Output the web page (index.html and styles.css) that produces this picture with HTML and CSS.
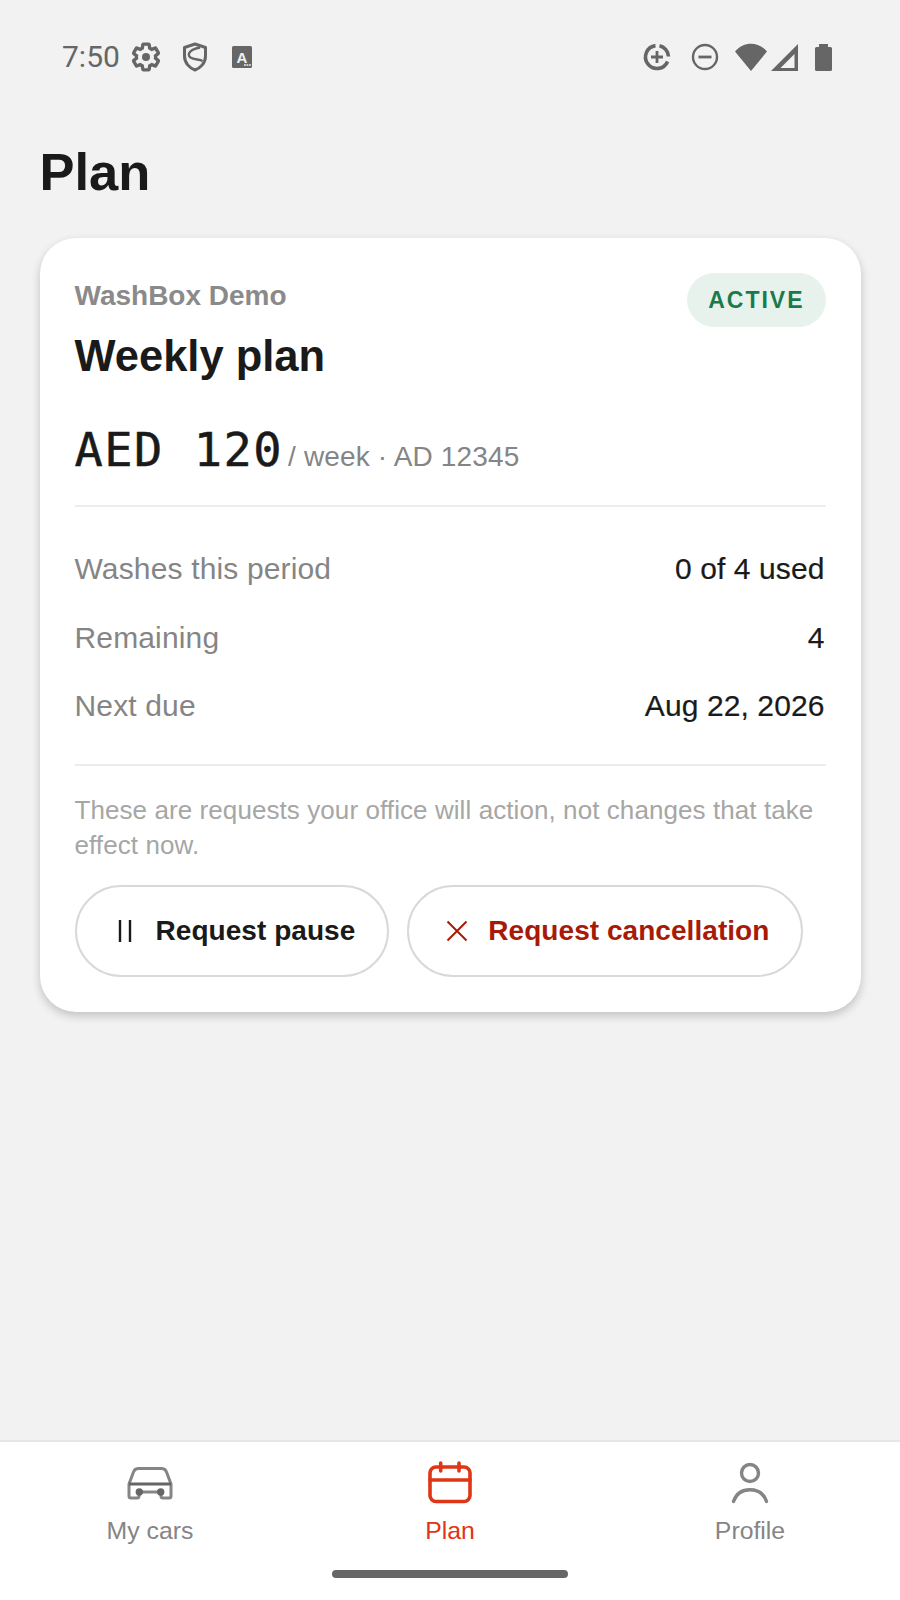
FILE: index.html
```html
<!DOCTYPE html>
<html lang="en">
<head>
    <meta charset="UTF-8">
    <meta name="viewport" content="width=device-width, initial-scale=1.0">
    <title>Plan - WashBox</title>
    <link rel="stylesheet" href="styles.css">
</head>
<body>
    <div class="screen">
        <div class="status-bar">
            <div class="status-left">
                <span class="clock">7:50</span>
                <svg class="status-icon gear" viewBox="0 0 24 24">
                    <path d="M19.14 12.94c.04-.3.06-.61.06-.94 0-.32-.02-.64-.07-.94l2.03-1.58c.18-.14.23-.41.12-.61l-1.92-3.32c-.12-.22-.37-.29-.59-.22l-2.39.96c-.5-.38-1.03-.7-1.62-.94l-.36-2.54c-.04-.24-.24-.41-.48-.41h-3.84c-.24 0-.43.17-.47.41l-.36 2.54c-.59.24-1.13.57-1.62.94l-2.39-.96c-.22-.08-.47 0-.59.22L2.74 8.87c-.12.21-.08.47.12.61l2.03 1.58c-.05.3-.09.63-.09.94s.02.64.07.94l-2.03 1.58c-.18.14-.23.41-.12.61l1.92 3.32c.12.22.37.29.59.22l2.39-.96c.5.38 1.03.7 1.62.94l.36 2.54c.05.24.24.41.48.41h3.84c.24 0 .44-.17.47-.41l.36-2.54c.59-.24 1.13-.56 1.62-.94l2.39.96c.22.08.47 0 .59-.22l1.92-3.32c.12-.22.07-.47-.12-.61l-2.01-1.58z" fill="none" stroke="#666" stroke-width="2.5"/>
                    <circle cx="12" cy="12" r="3" fill="#666"/>
                </svg>
                <svg class="status-icon shield" viewBox="0 0 32 32">
                    <path d="M16 3l10.5 3.5V15c0 7-5 12-10.5 14C10.5 27 5.5 22 5.5 15V6.5z" fill="none" stroke="#666" stroke-width="3" stroke-linejoin="round"/>
                    <path d="M21 6.5C12 8 7 13 11.5 16.5 15 19 21 18 23.5 20" fill="none" stroke="#666" stroke-width="2.4"/>
                </svg>
                <svg class="status-icon letter" viewBox="0 0 32 32">
                    <rect x="6" y="5" width="20" height="22" rx="1.5" fill="#666"/>
                    <text class="letter-a" x="16" y="21.7" text-anchor="middle">A</text>
                    <path d="M18 24h1.800M20.500 24h1.800M23 24h1.800" stroke="#f2f2f2" stroke-width="1.6"/>
                </svg>
            </div>
            <div class="status-right">
                <svg class="status-icon" viewBox="0 0 32 32">
                    <path d="M18.5 4.8A11.5 11.5 0 0 1 27.5 15.5" fill="none" stroke="#666" stroke-width="3.6"/>
                    <path d="M26.6 20.5A11.5 11.5 0 1 1 14.5 4.6" fill="none" stroke="#666" stroke-width="3.6"/>
                    <path d="M16 10v12M10 16h12" stroke="#666" stroke-width="2.8"/>
                </svg>
                <svg class="status-icon minus" viewBox="0 0 32 32">
                    <circle cx="16" cy="16" r="12" fill="none" stroke="#666" stroke-width="2.4"/>
                    <path d="M9.5 16h13" stroke="#666" stroke-width="2.8"/>
                </svg>
                <svg class="wifi" viewBox="0 0 32 28">
                    <path d="M0 8.5C8.5 -2 23.5 -2 32 8.5L16 28z" fill="#666"/>
                </svg>
                <svg class="signal" viewBox="0 0 27 27">
                    <path d="M0 27L27 0v27zM9.5 24h14V10z" fill="#666" fill-rule="evenodd"/>
                </svg>
                <svg class="battery" viewBox="0 0 17 27">
                    <path d="M4 0h9v3h2.500A1.500 1.500 0 0 1 17 4.500v21a1.500 1.500 0 0 1-1.500 1.500h-14A1.500 1.500 0 0 1 0 25.500v-21A1.500 1.500 0 0 1 1.500 3H4z" fill="#666"/>
                </svg>
            </div>
        </div>

        <main class="content">
            <h1 class="page-title">Plan</h1>

            <section class="card">
                <div class="card-head">
                    <div>
                        <div class="company">WashBox Demo</div>
                        <h2 class="plan-name">Weekly plan</h2>
                    </div>
                    <span class="badge">ACTIVE</span>
                </div>

                <div class="price-line">
                    <span class="price">AED 120</span>
                    <span class="price-sub">/ week · AD 12345</span>
                </div>

                <div class="rows">
                    <div class="row"><span class="row-label">Washes this period</span><span class="row-value">0 of 4 used</span></div>
                    <div class="row"><span class="row-label">Remaining</span><span class="row-value">4</span></div>
                    <div class="row"><span class="row-label">Next due</span><span class="row-value">Aug 22, 2026</span></div>
                </div>

                <p class="note">These are requests your office will action, not changes that take effect now.</p>

                <div class="actions">
                    <button class="pill">
                        <svg class="pill-icon" viewBox="0 0 24 24"><path d="M7 1v22M17 1v22" fill="none" stroke="#1a1a1a" stroke-width="2.4"/></svg>
                        Request pause
                    </button>
                    <button class="pill danger">
                        <svg class="pill-icon" viewBox="0 0 24 24"><path d="M2.5 2.5l19 19M21.500 2.500l-19 19" fill="none" stroke="#a81a08" stroke-width="2"/></svg>
                        Request cancellation
                    </button>
                </div>
            </section>
        </main>

        <nav class="tabs">
            <div class="tab">
                <svg class="tab-icon" viewBox="0 0 48 48" fill="none" stroke="#858585" stroke-width="3" stroke-linejoin="round">
                    <path d="M3 24l4.500-12a5 5 0 0 1 4.500-3.500h24a5 5 0 0 1 4.500 3.500L45 24v12a2 2 0 0 1-2 2h-6a2 2 0 0 1-2-2v-4H13v4a2 2 0 0 1-2 2H5a2 2 0 0 1-2-2z"/>
                    <path d="M3 24h42" stroke="#666"/>
                    <circle cx="13.3" cy="32" r="2.2" fill="#666" stroke="#666"/>
                    <circle cx="34.7" cy="32" r="2.2" fill="#666" stroke="#666"/>
                </svg>
                <span>My cars</span>
            </div>
            <div class="tab active">
                <svg class="tab-icon" viewBox="0 0 48 48" fill="none" stroke="#e03516" stroke-width="3.6" stroke-linecap="round">
                    <rect x="4" y="7" width="40" height="34.5" rx="6"/>
                    <path d="M4 20h40M14.700 3v8M33 3v8"/>
                </svg>
                <span>Plan</span>
            </div>
            <div class="tab">
                <svg class="tab-icon" viewBox="0 0 48 48" fill="none" stroke="#858585" stroke-width="3.4" stroke-linecap="round">
                    <circle cx="24" cy="13" r="8.5"/>
                    <path d="M7.500 41.500c2.500-7.500 8.500-11.800 16.500-11.800S38 34 40.500 41.500"/>
                </svg>
                <span>Profile</span>
            </div>
            <div class="home-bar"></div>
        </nav>
    </div>
</body>
</html>
```

FILE: styles.css
```css
* {
    margin: 0;
    padding: 0;
    box-sizing: border-box;
}

body {
    font-family: "Liberation Sans", Arial, sans-serif;
    background: #f2f2f2;
    color: #1a1a1a;
}

.screen {
    height: 1600px;
    display: flex;
    flex-direction: column;
}

.status-bar {
    height: 116px;
    padding: 0 68px 2px 62px;
    display: flex;
    align-items: center;
    justify-content: space-between;
}

.status-left,
.status-right {
    display: flex;
    align-items: center;
}

.clock {
    font-family: "Roboto", sans-serif;
    font-size: 30px;
    color: #666;
    margin-right: 10px;
    margin-bottom: 2px;
}

.status-icon {
    width: 32px;
    height: 32px;
    display: block;
}

.letter-a {
    font-size: 15px;
    font-weight: 700;
    fill: #f2f2f2;
}

.shield {
    margin-left: 17px;
}

.letter {
    margin-left: 15px;
}

.minus {
    margin-left: 16.5px;
}

.wifi {
    width: 32px;
    height: 28px;
    margin-left: 14px;
}

.signal {
    width: 27px;
    height: 27px;
    margin-left: 4px;
}

.battery {
    width: 17px;
    height: 27px;
    margin-left: 17px;
}

.content {
    flex: 1;
    padding: 0 39.5px;
}

.page-title {
    font-size: 52.5px;
    font-weight: 700;
    line-height: 60px;
    margin-top: 26px;
    margin-bottom: 36px;
}

.card {
    background: #fff;
    border-radius: 36px;
    padding: 35px 35px 35px;
    box-shadow: 0 4px 10px rgba(0, 0, 0, 0.2);
}

.card-head {
    display: flex;
    justify-content: space-between;
    align-items: flex-start;
}

.company {
    font-size: 28px;
    font-weight: 700;
    line-height: 40px;
    margin-top: 3px;
    color: #8a8a8a;
}

.plan-name {
    font-size: 43.5px;
    font-weight: 700;
    line-height: 52px;
    margin-top: 14px;
}

.badge {
    background: #e8f2ec;
    color: #1b7a4c;
    font-size: 23px;
    font-weight: 700;
    letter-spacing: 2px;
    line-height: 54px;
    padding: 0 21px;
    border-radius: 27px;
}

.price-line {
    margin-top: 35px;
    padding-bottom: 22px;
    border-bottom: 2px solid #ececec;
    display: flex;
    align-items: baseline;
    gap: 5px;
}

.price {
    font-family: "DejaVu Sans Mono", monospace;
    font-size: 47px;
    line-height: 66px;
    letter-spacing: 1.5px;
    -webkit-text-stroke: 0.5px #1a1a1a;
}

.price-sub {
    font-size: 28px;
    letter-spacing: 0.15px;
    color: #858585;
}

.rows {
    padding: 28px 0 23px;
    border-bottom: 2px solid #ececec;
}

.row {
    height: 68.5px;
    padding-right: 1px;
    display: flex;
    align-items: center;
    justify-content: space-between;
    font-size: 30px;
}

.row-label {
    color: #858585;
    letter-spacing: 0.15px;
}

.row-value {
    letter-spacing: 0.1px;
    -webkit-text-stroke: 0.2px #1a1a1a;
}

.note {
    margin-top: 27px;
    font-size: 26px;
    letter-spacing: 0.08px;
    line-height: 35px;
    color: #a6a6a6;
}

.actions {
    margin-top: 22px;
    display: flex;
    gap: 18px;
}

.pill {
    flex: none;
    height: 92px;
    padding: 0 32px 0 36px;
    background: #fff;
    border: 2px solid #d9d9d9;
    border-radius: 46px;
    font-family: inherit;
    font-size: 28px;
    font-weight: 700;
    letter-spacing: 0.05px;
    white-space: nowrap;
    color: #1a1a1a;
    display: flex;
    align-items: center;
    gap: 19px;
}

.pill.danger {
    color: #a81a08;
}

.pill-icon {
    width: 24px;
    height: 24px;
}

.tabs {
    position: relative;
    height: 160px;
    background: #fff;
    border-top: 2px solid #e6e6e6;
    display: grid;
    grid-template-columns: repeat(3, 1fr);
    padding-top: 18px;
}

.tab {
    display: flex;
    flex-direction: column;
    align-items: center;
    gap: 9px;
    font-size: 24.8px;
    color: #858585;
}

.tab.active {
    color: #e03516;
}

.tab-icon {
    width: 48px;
    height: 48px;
}

.home-bar {
    position: absolute;
    left: 332px;
    bottom: 22px;
    width: 236px;
    height: 8px;
    border-radius: 4px;
    background: #666;
}
```
